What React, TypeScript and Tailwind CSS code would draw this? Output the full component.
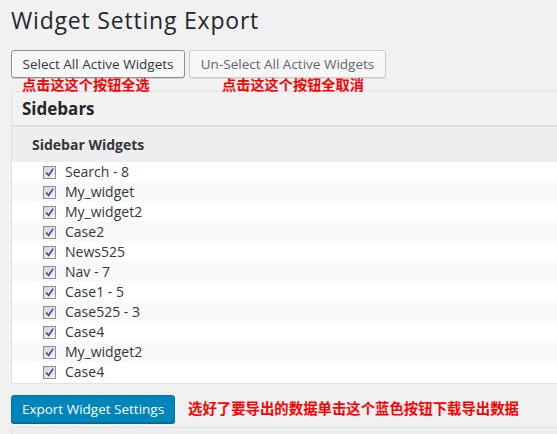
import React from "react";

const items = [
  "Search - 8",
  "My_widget",
  "My_widget2",
  "Case2",
  "News525",
  "Nav - 7",
  "Case1 - 5",
  "Case525 - 3",
  "Case4",
  "My_widget2",
  "Case4",
];

function Check() {
  return (
    <span className="flex h-[13px] w-[13px] shrink-0 items-center justify-center border border-[#8e8f8f] bg-gradient-to-br from-[#d4d4d4] to-[#f6f6f6]">
      <svg width="11" height="11" viewBox="0 0 11 11">
        <path d="M2.2 5.6 L4.6 8.4 L9.2 1.6" fill="none" stroke="#33449e" strokeWidth="1.6" />
      </svg>
    </span>
  );
}

export default function App() {
  return (
    <div
      className="min-h-[434px] overflow-hidden bg-[#f1f1f1] pl-[11px]"
      style={{ fontFamily: "'Open Sans', 'Noto Sans CJK SC', sans-serif" }}
    >
      <h1 className="mt-[5px] text-[23px] leading-[30px] tracking-[0.8px] font-normal text-[#23282d]">
        Widget Setting Export
      </h1>
      <div className="mt-[15px] flex gap-[4px]">
        <button className="h-[28px] w-[174px] rounded-[3px] border border-[#8f9295] bg-[#f7f7f7] text-[13.5px] text-[#32373c] shadow-[0_1px_0_#ccc]">
          Select All Active Widgets
        </button>
        <button className="h-[28px] w-[197px] rounded-[3px] border border-[#cccccc] bg-[#f7f7f7] text-[13.5px] text-[#60666d] shadow-[0_1px_0_#ddd]">
          Un-Select All Active Widgets
        </button>
      </div>
      <div className="flex h-[13px] text-[14.2px] leading-[14px] font-bold text-[#ff0000]">
        <span className="ml-[11px] w-[200px] whitespace-nowrap">点击这这个按钮全选</span>
        <span className="whitespace-nowrap">点击这这个按钮全取消</span>
      </div>
      <div className="border-y border-l border-[#e2e2e2] bg-white">
        <div className="flex h-[35px] items-center border-b-2 border-[#dedede] bg-[#f2f2f2] pl-[10px] text-[17px] font-bold text-[#23282d]">
          Sidebars
        </div>
        <div className="flex h-[35px] items-center bg-[#eeeeee] pl-[20px] text-[14px] font-bold text-[#32373c]">
          Sidebar Widgets
        </div>
        <div className="pb-[1px]">
          {items.map((it, i) => (
            <div
              key={i}
              className={`flex h-[20px] items-center pl-[31px] text-[14px] text-[#32373c] ${i % 2 === 1 ? "bg-[#f9f9f9]" : "bg-white"}`}
            >
              <Check />
              <span className="ml-[9px] leading-[20px]">{it}</span>
            </div>
          ))}
        </div>
      </div>
      <div className="mt-[11px] flex items-center">
        <button className="h-[28px] w-[164px] rounded-[3px] border border-[#0073aa] bg-[#0085ba] text-[13.5px] text-white shadow-[0_1px_0_#006799]">
          Export Widget Settings
        </button>
        <span className="ml-[13px] whitespace-nowrap text-[14.4px] font-bold text-[#ff0000]">
          选好了要导出的数据单击这个蓝色按钮下载导出数据
        </span>
      </div>
      <div className="mt-[4px] h-[20px] border-t border-l border-[#e2e2e2] bg-[#eeeeee]" />
    </div>
  );
}
